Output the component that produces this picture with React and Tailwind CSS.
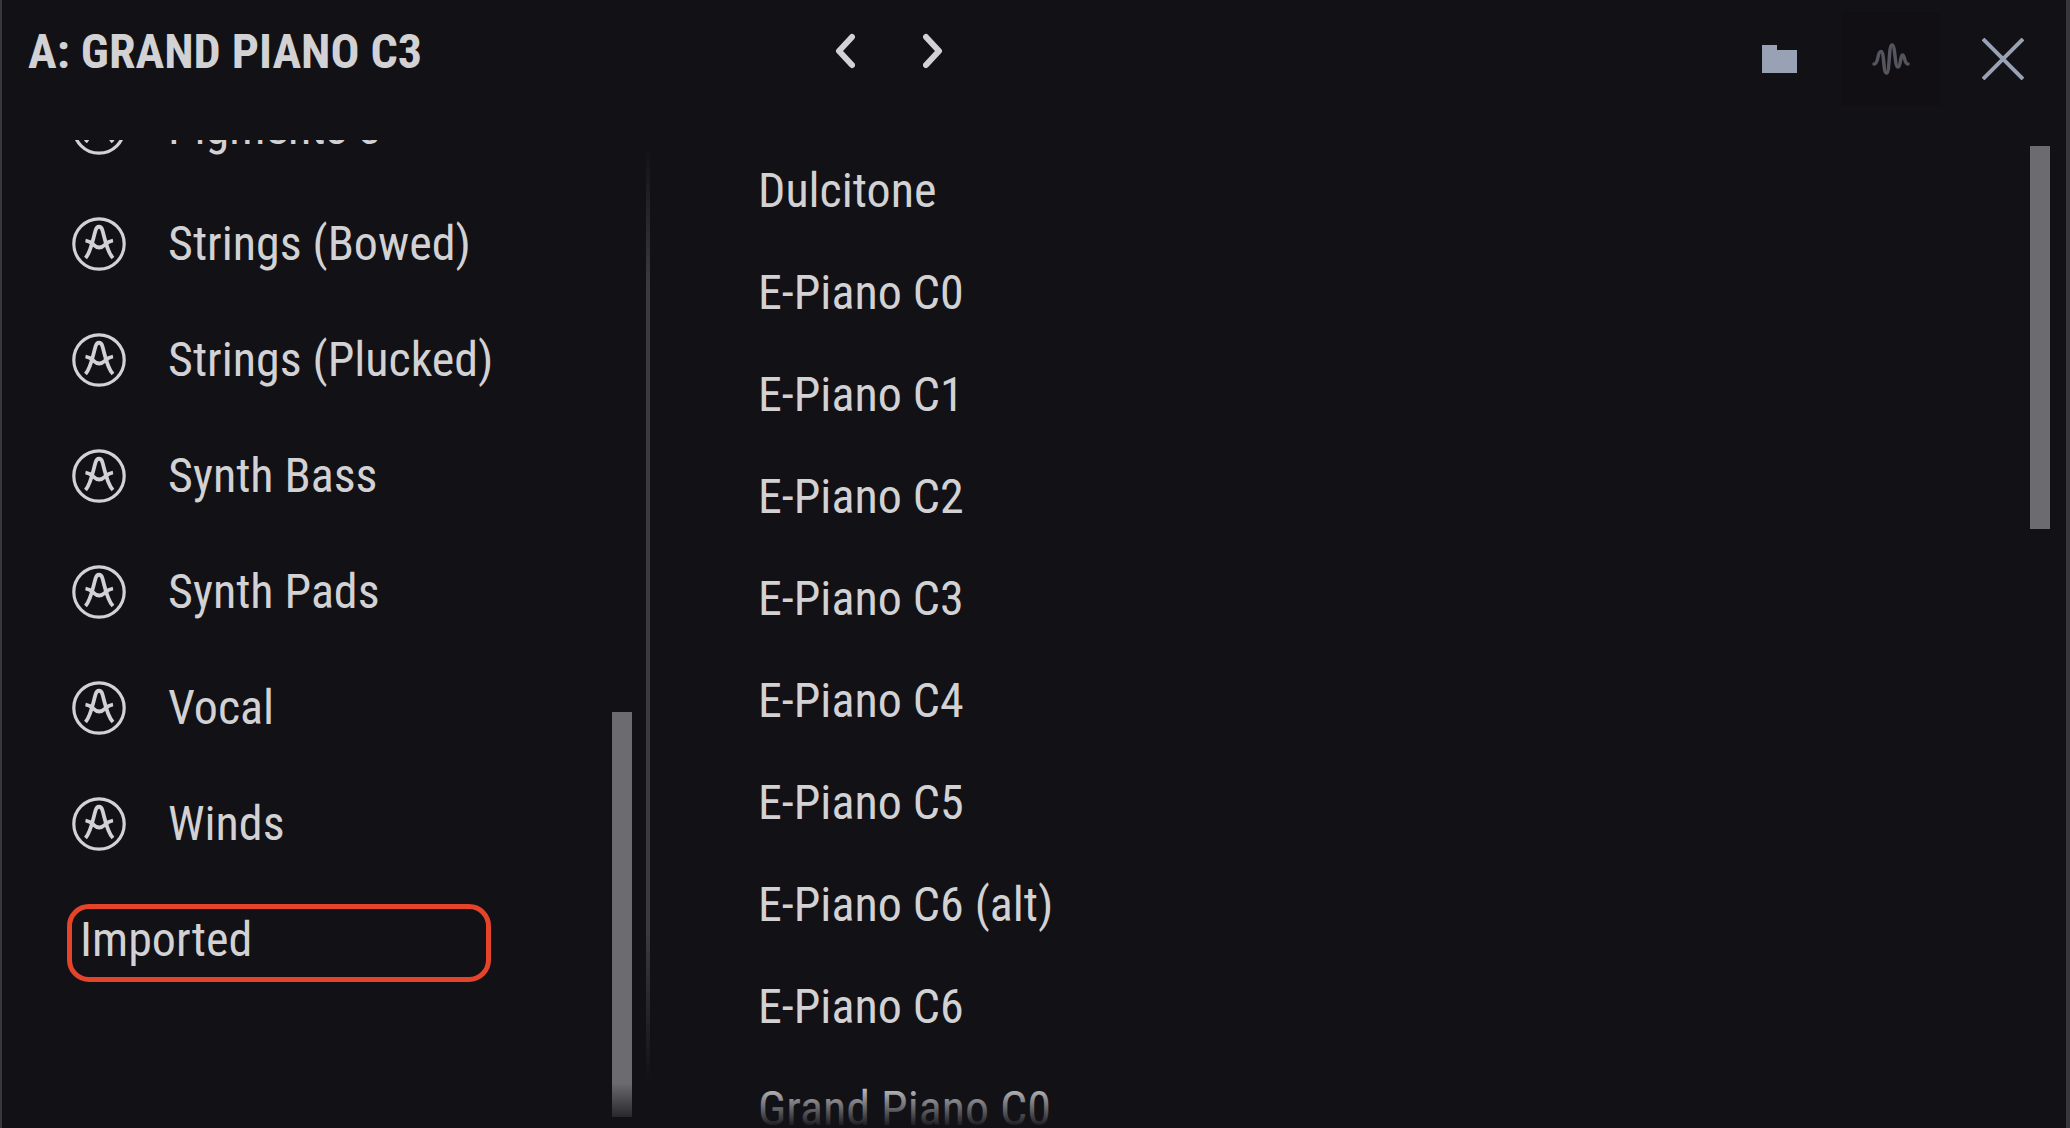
const folders = [
  "Pigments 3",
  "Strings (Bowed)",
  "Strings (Plucked)",
  "Synth Bass",
  "Synth Pads",
  "Vocal",
  "Winds",
];

const samples = [
  "Dulcitone",
  "E-Piano C0",
  "E-Piano C1",
  "E-Piano C2",
  "E-Piano C3",
  "E-Piano C4",
  "E-Piano C5",
  "E-Piano C6 (alt)",
  "E-Piano C6",
  "Grand Piano C0",
];

const FactoryIcon = () => (
  <svg className="w-[54px] h-[54px] shrink-0" viewBox="0 0 54 54" fill="none" stroke="currentColor" aria-hidden="true">
    <circle cx="27" cy="27" r="25.2" strokeWidth="3.2" />
    <path d="M13.5 41C19 35 21 22 23.500 13.5C25 8.500 29 8.500 30.500 13.5C33 22 35 35 41 41" strokeWidth="3.8" />
    <path d="M13.5 23.5C22 25 21 30.5 27.2 30.5C33.400 30.5 32.5 25 41 23.5" strokeWidth="3.8" />
  </svg>
);

const ChevronIcon = ({ d }) => (
  <svg
    className="w-[20px] h-[36px]"
    viewBox="0 0 20 36"
    fill="none"
    stroke="currentColor"
    strokeWidth="6"
    strokeLinecap="round"
    strokeLinejoin="round"
    aria-hidden="true"
  >
    <path d={d} />
  </svg>
);

const Header = () => (
  <header className="flex items-start h-[140px] shrink-0 pl-[26px] pr-[14px]">
    <h1 className="w-[38%] text-[48px] leading-[104px] font-bold uppercase whitespace-nowrap">
      A: Grand Piano C3
    </h1>
    <div className="flex ml-1">
      <button aria-label="Previous sample" className="w-[88px] h-[102px] flex items-center justify-center">
        <ChevronIcon d="M17 4L4 18L17 32" />
      </button>
      <button aria-label="Next sample" className="w-[88px] h-[102px] flex items-center justify-center">
        <ChevronIcon d="M3 4L16 18L3 32" />
      </button>
    </div>
    <div className="flex gap-[14px] ml-auto pt-3 text-[#99a2b5]">
      <button aria-label="Browse files" className="w-[98px] h-[94px] flex items-center justify-center">
        <svg className="w-[35px] h-[28px]" viewBox="0 0 35 28" fill="currentColor" aria-hidden="true">
          <path d="M0 0H15V5H35V28H0Z" />
        </svg>
      </button>
      <button
        aria-label="Show waveform"
        className="w-[98px] h-[94px] flex items-center justify-center bg-[#110f14] text-[#54555e]"
      >
        <svg
          className="w-[38px] h-[32px]"
          viewBox="0 0 38 32"
          fill="none"
          stroke="currentColor"
          strokeWidth="3.5"
          strokeLinecap="round"
          aria-hidden="true"
        >
          <path d="M2 21C7 21 5 8.5 9 8.5C12.5 8.5 11 30 14.5 30C18 30 16.5 2 20 2C23.5 2 22.5 24 26 24C29 24 28 12 30.5 12C33 12 32 21 36 21" />
        </svg>
      </button>
      <button aria-label="Close" className="w-[98px] h-[94px] flex items-center justify-center">
        <svg className="w-[42px] h-[42px]" viewBox="0 0 42 42" stroke="currentColor" strokeWidth="4" aria-hidden="true">
          <path d="M1 1L41 41M41 1L1 41" />
        </svg>
      </button>
    </div>
  </header>
);

const FolderList = () => (
  <nav aria-label="Folders" className="flex w-[644px] shrink-0">
    <ul className="flex-1 flex flex-col justify-end overflow-hidden pb-[130px]">
      {folders.map((name) => (
        <li key={name} className="shrink-0">
          <button className="flex items-center gap-[42px] w-full h-[116px] pl-[70px] text-left whitespace-nowrap">
            <FactoryIcon />
            {name}
          </button>
        </li>
      ))}
      <li className="shrink-0 pt-[22px] pb-4 pl-[65px]">
        <button className="block w-[424px] h-[78px] pl-[8px] text-left leading-[62px] border-[5px] border-[#e5432a] rounded-[22px]">
          <span className="block h-full">Imported</span>
        </button>
      </li>
    </ul>
    <div className="flex flex-col justify-end w-5 mr-[14px] pb-[11px]">
      <div className="h-[41.5%] bg-[#6c6b70]" />
    </div>
  </nav>
);

const SampleList = () => (
  <section aria-label="Samples" className="flex flex-1 pr-4">
    <ul className="flex-1 overflow-hidden">
      {samples.map((name) => (
        <li key={name}>
          <button className="block w-full h-[102px] pl-[108px] text-left whitespace-nowrap">{name}</button>
        </li>
      ))}
    </ul>
    <div className="w-5 pt-[6px]">
      <div className="h-[39%] bg-[#6c6b70]" />
    </div>
  </section>
);

const App = () => {
  return (
    <div className="flex flex-col h-screen overflow-hidden bg-[#121116] border-l-2 border-r-4 border-[#38383a] text-[#d2d1d4] text-[48px] font-['Roboto_Condensed',Roboto,sans-serif]">
      <Header />
      <main className="relative flex flex-1 min-h-0">
        <FolderList />
        <div className="w-1 mt-2 mb-12 bg-[linear-gradient(to_bottom,transparent,#3c3c3e_15%,#3c3c3e_84%,transparent)]" />
        <SampleList />
        {/* fades out the rows at the bottom edge */}
        <div className="absolute inset-x-0 bottom-0 h-[45px] bg-linear-to-b from-transparent to-[#121116] pointer-events-none" />
      </main>
    </div>
  );
};

export default App;
